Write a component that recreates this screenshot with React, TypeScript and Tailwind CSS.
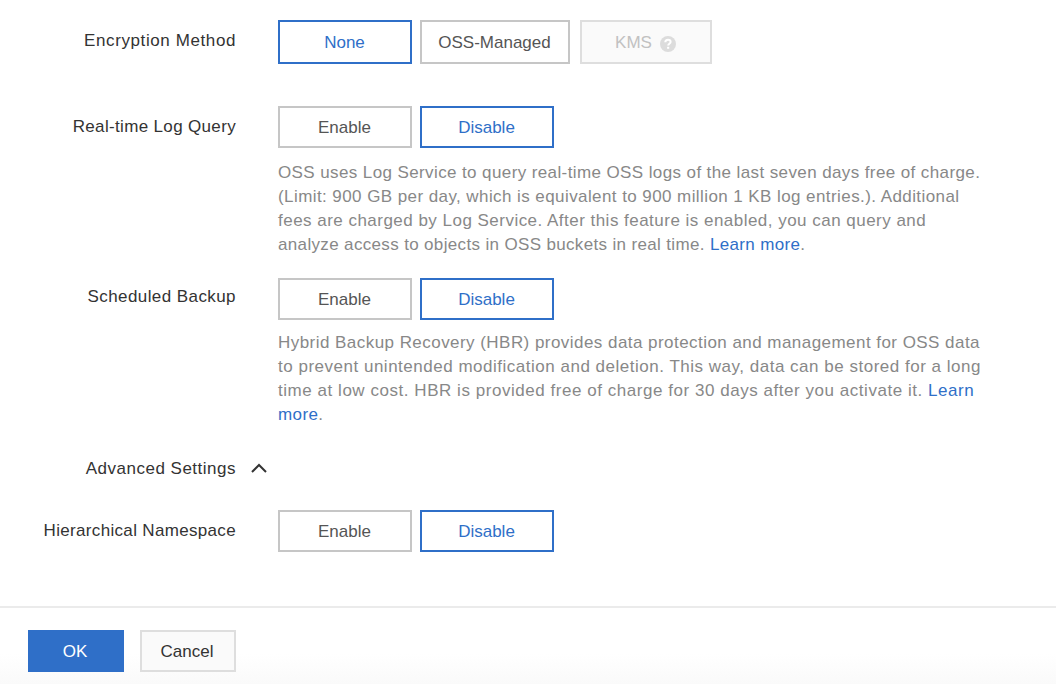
import type { ReactNode } from 'react';

type Variant = 'selected' | 'plain' | 'disabled';

const variants: Record<Variant, string> = {
  selected: 'border-[#2f6fc8] bg-white text-[#2f6fc8]',
  plain: 'border-[#c6c6c6] bg-white text-[#555555]',
  disabled: 'border-[#dedede] bg-[#fafafa] text-[#c1c1c1]',
};

function Option({ variant, size, children }: { variant: Variant; size: string; children: ReactNode }) {
  return (
    <button
      type="button"
      disabled={variant === 'disabled'}
      className={`flex shrink-0 items-center justify-center border-2 pt-0.5 pr-px whitespace-nowrap ${variants[variant]} ${size}`}
    >
      {children}
    </button>
  );
}

function Label({ children, className = '' }: { children: ReactNode; className?: string }) {
  return (
    <div className={`w-[236px] shrink-0 text-right leading-6 whitespace-nowrap text-[#333333] ${className}`}>
      {children}
    </div>
  );
}

function Toggle() {
  return (
    <div className="flex gap-2">
      <Option variant="plain" size="h-[42px] w-[134px]">Enable</Option>
      <Option variant="selected" size="h-[42px] w-[134px]">Disable</Option>
    </div>
  );
}

function Line({ children, className }: { children: ReactNode; className: string }) {
  return <span className={`block w-fit whitespace-nowrap ${className}`}>{children}</span>;
}

function Link({ children }: { children: ReactNode }) {
  return <a href="#learn" className="text-[#2f6fc8]">{children}</a>;
}

export default function App() {
  return (
    <div className="flex h-[684px] w-[1056px] flex-col overflow-hidden bg-white font-['Liberation_Sans',Arial,sans-serif] text-[17px]">
      <div className="flex h-[606px] shrink-0 flex-col pt-5">
        <div className="flex h-[86px] items-start gap-[42px]">
          <Label className="pt-[9px] tracking-[0.6px]">Encryption Method</Label>
          <div className="flex">
            <Option variant="selected" size="h-11 w-[134px]">None</Option>
            <Option variant="plain" size="ml-2 h-11 w-[150px]">OSS-Managed</Option>
            <Option variant="disabled" size="ml-2.5 h-11 w-[132px]">
              KMS
              <svg viewBox="0 0 16 16" className="mt-0.5 ml-2 size-4">
                <circle cx="8" cy="8" r="8" fill="#dcdcdc" />
                <path d="M5.3 6.3C5.3 4.6 6.5 3.7 8 3.7s2.6.9 2.6 2.3c0 1.8-2.4 1.8-2.4 3.6" fill="none" stroke="#fff" strokeWidth="2" />
                <rect x="7.1" y="10.8" width="2.1" height="2" fill="#fff" />
              </svg>
            </Option>
          </div>
        </div>

        <div className="flex h-[172px] items-start gap-[42px]">
          <Label className="pt-[9px] tracking-[0.34px]">Real-time Log Query</Label>
          <div>
            <Toggle />
            <p className="mt-[13px] leading-6 text-[#888888]">
              <Line className="tracking-[0.393px]">OSS uses Log Service to query real-time OSS logs of the last seven days free of charge.</Line>
              <Line className="tracking-[0.42px]">(Limit: 900 GB per day, which is equivalent to 900 million 1 KB log entries.). Additional</Line>
              <Line className="tracking-[0.477px]">fees are charged by Log Service. After this feature is enabled, you can query and</Line>
              <Line className="tracking-[0.345px]">analyze access to objects in OSS buckets in real time. <Link>Learn more</Link>.</Line>
            </p>
          </div>
        </div>

        <div className="flex h-[178px] items-start gap-[42px]">
          <Label className="pt-[7px] tracking-[0.42px]">Scheduled Backup</Label>
          <div>
            <Toggle />
            <p className="mt-[11px] leading-6 text-[#888888]">
              <Line className="tracking-[0.454px]">Hybrid Backup Recovery (HBR) provides data protection and management for OSS data</Line>
              <Line className="tracking-[0.51px]">to prevent unintended modification and deletion. This way, data can be stored for a long</Line>
              <Line className="tracking-[0.54px]">time at low cost. HBR is provided free of charge for 30 days after you activate it. <Link>Learn</Link></Line>
              <Line className="tracking-[0.4px]"><Link>more</Link>.</Line>
            </p>
          </div>
        </div>

        <div className="flex h-[54px] items-start">
          <Label className="pt-px tracking-[0.5px]">Advanced Settings</Label>
          <svg viewBox="0 0 16 10" className="mt-[7px] ml-[15px] h-2.5 w-4" fill="none" stroke="#333333" strokeWidth="2">
            <path d="M1 9 8 2l7 7" />
          </svg>
        </div>

        <div className="flex items-start gap-[42px]">
          <Label className="pt-[9px] tracking-[0.33px]">Hierarchical Namespace</Label>
          <Toggle />
        </div>
      </div>

      <div className="flex flex-1 items-start gap-4 border-t-2 border-[#ebebeb] bg-linear-to-b from-white from-60% to-[#fafafa] pt-[22px] pl-7">
        <button type="button" className="h-[42px] w-24 bg-[#2f6fc8] pt-0.5 pr-0.5 text-white">OK</button>
        <button type="button" className="h-[42px] w-24 border-2 border-[#dedede] bg-[#fafafa] pt-0.5 pr-0.5 text-[#333333]">Cancel</button>
      </div>
    </div>
  );
}
